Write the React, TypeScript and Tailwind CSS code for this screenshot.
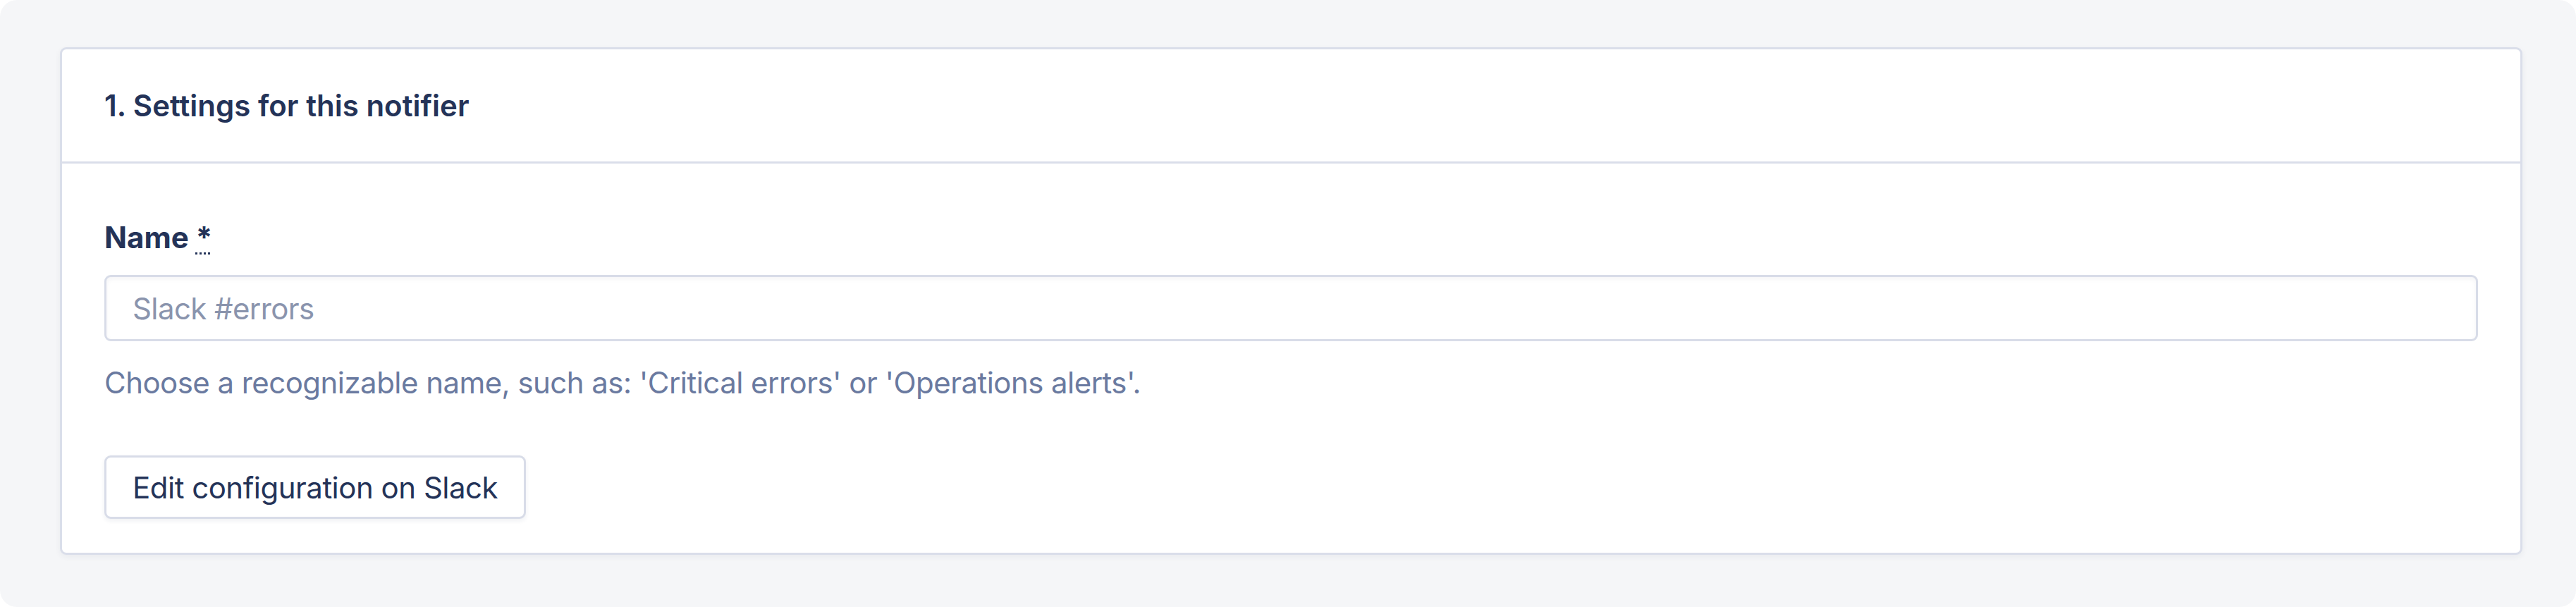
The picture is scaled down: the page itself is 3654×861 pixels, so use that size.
export default function App() {
  return (
    <div className="h-[861px] w-full bg-white font-['Inter','Noto_Sans',sans-serif]">
      <div className="h-full rounded-[24px] bg-[#f5f6f8] pl-[85px] pr-[76px] pt-[67px]">
        <section className="rounded-[9px] border-[3px] border-[#dadeea] bg-white shadow-[0_3px_9px_rgba(30,45,80,0.06)]">
          <header className="flex h-[162px] items-center border-b-[3px] border-[#dadeea] px-[60px]">
            <h2 className="text-[42px] font-semibold leading-[60px] text-[#243358]">1. Settings for this notifier</h2>
          </header>
          <div className="px-[60px] pb-[48px] pt-[75px]">
            <label htmlFor="notifier-name" className="block text-[42px] font-bold leading-[60px] text-[#243358]">
              Name <abbr title="required" className="underline decoration-dotted decoration-[3px] underline-offset-[6px]">*</abbr>
            </label>
            <input
              id="notifier-name"
              placeholder="Slack #errors"
              className="mt-[23px] block h-[94px] w-full rounded-[9px] border-[3px] border-[#d8dce8] bg-white px-[37px] text-[42px] tracking-[-0.6px] text-[#243358] shadow-[inset_0_3px_6px_rgba(30,45,80,0.05)] outline-none placeholder:text-[#8a94ad]"
            />
            <p className="mt-[29px] text-[42px] leading-[60px] tracking-[-0.55px] text-[#6a7aa0]">
              Choose a recognizable name, such as: 'Critical errors' or 'Operations alerts'.
            </p>
            <button
              type="button"
              className="mt-[73px] h-[90px] rounded-[9px] border-[3px] border-[#d8dce8] bg-white px-[37px] text-[42px] tracking-[-0.5px] text-[#243358] shadow-[0_3px_6px_rgba(30,45,80,0.07)]"
            >
              Edit configuration on Slack
            </button>
          </div>
        </section>
      </div>
    </div>
  );
}
